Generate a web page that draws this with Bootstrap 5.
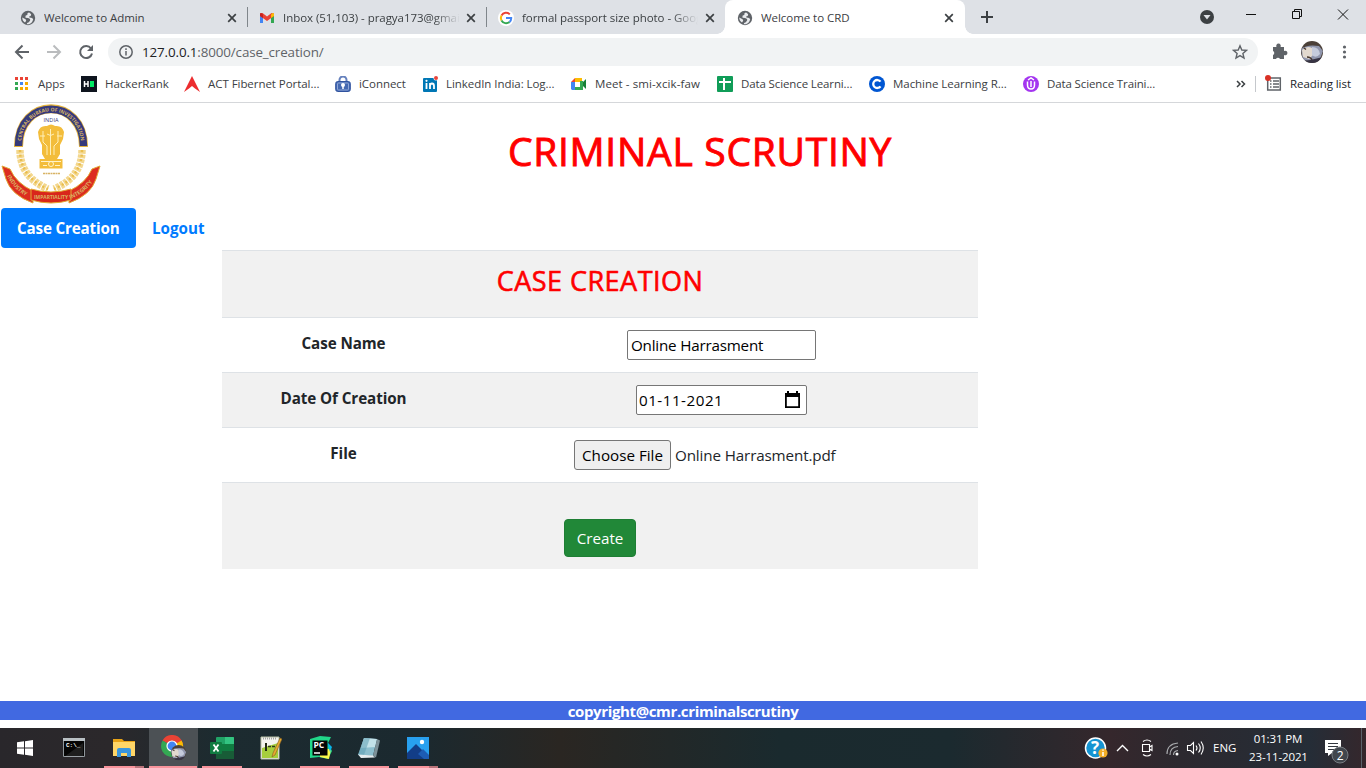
<!DOCTYPE html>
<html lang="en">
<head>
<meta charset="utf-8">
<title>Welcome to CRD</title>
<meta name="viewport" content="width=device-width, initial-scale=1">
<link href="https://cdn.jsdelivr.net/npm/bootstrap@5.3.0/dist/css/bootstrap.min.css" rel="stylesheet">
<style>
html,body{height:768px;overflow:hidden}
body{font-family:"Open Sans","Noto Sans",sans-serif;color:#212529;background:#fff}
svg{display:block;flex:none}
.ui{font-size:11.5px;letter-spacing:-.05px;white-space:nowrap;color:#3c4043}
/* browser window */
.tabstrip{height:34px;background:#dee1e6}
.tab{height:34px;padding-top:1px}
.t1{width:248px;padding-left:20px;border-right:0}
.t2{width:239px;padding-left:11px}
.t3{width:238px;padding-left:11px}
.t4{width:240px;padding-left:12px;background:#fff;border-radius:8px 8px 0 0;position:relative}
.t4::before,.t4::after{content:"";position:absolute;bottom:0;width:8px;height:8px}
.t4::before{left:-8px;background:radial-gradient(circle at 0 0,#dee1e6 7.5px,#fff 8px)}
.t4::after{right:-8px;background:radial-gradient(circle at 100% 0,#dee1e6 7.5px,#fff 8px)}
.tab-name{margin-left:8px;overflow:hidden;height:18px;line-height:18px}
.tab-name.faded{-webkit-mask-image:linear-gradient(90deg,#000 85%,transparent)}
.vsep{width:1px;height:20px;background:#80868b}
.toolbar{height:36px}
.omni{margin-left:12px;width:1150px;height:28px;background:#f1f3f4;border-radius:14px;padding:0 10px}
.url{font-size:13.4px;margin-left:8px;letter-spacing:-.13px;color:#5f6368}
.url b{font-weight:400;color:#202124}
.bookmarks{height:33px;display:grid;grid-template-columns:67px 103px 151px 87px 149px 146px 152px 154px 212px 1fr;padding:0 14px 4px;border-bottom:1px solid #d5d7da}
.bookmarks>div{display:flex;align-items:center}
.bookmarks span{margin-left:8px}
.bookmarks .wide{letter-spacing:.1px}
.bookmarks .tight{letter-spacing:-.12px}
/* site */
.site{height:625px}
.site-head{height:105px;padding:1px}
.site-title{width:1198px;padding-top:23px;text-align:center;color:red;font-size:39px;font-weight:500;line-height:48px;letter-spacing:.72px;-webkit-text-stroke:.9px red;margin:0}
.pill{height:40px;padding:0 16px;font-size:15.2px;font-weight:700;line-height:41px;color:#007bff}
.pill.on{background:#007bff;color:#fff;border-radius:4px;width:135px;letter-spacing:-.17px}
.case-table{width:756px;margin:2px 0 0 222px;table-layout:fixed;color:#212529}
.case-table td,.case-table th{border:0;border-top:1px solid #dee2e6;padding:12px;text-align:center;vertical-align:top;height:55px;background:transparent;box-shadow:none;line-height:24px;font-size:15.2px}
.case-table th{letter-spacing:-.08px;padding-top:13px;padding-bottom:11px}
.case-table tr:nth-child(odd){background:#f1f1f1}
.case-table .first td{height:67px}
.case-table .last td{height:86px;padding-top:36px;padding-bottom:11px}
.case-table .last td{line-height:20px}
.case-title{color:red;font-size:27px;font-weight:500;line-height:36px;letter-spacing:.48px;-webkit-text-stroke:.6px red;margin:0}
.field{height:30px;background:#fff;border:1px solid #767676;border-radius:2px;color:#000;font-size:15.2px;letter-spacing:-.2px;padding:0 3px;display:flex;align-items:center;margin:0 auto}
.f-name{width:189px}.f-date{width:171px;padding-left:2px}
.date-text{letter-spacing:.5px}
.file-text{letter-spacing:-.13px}
.pick{height:30px;width:97px;border:1px solid #767676;border-radius:3px;background:#efefef;font-size:15.2px;color:#000;padding:0;line-height:28px}
.btn-create{background:#218838;border-color:#1e7e34;color:#fff;font-size:15.2px;width:72px;height:38px;border-radius:4px;padding:0}
.foot{height:19px;background:#4169e1;color:#fff;font-weight:700;font-size:15px;line-height:21px;letter-spacing:-.36px;text-align:center;margin-top:132px}
/* taskbar */
.taskbar{height:40px;background:linear-gradient(90deg,#29272b 0,#2b282b 110px,#1c2b30 220px,#1b292f 420px,#2a2622 560px,#1a2a2e 780px,#1b2a2f 950px,#35272c 1110px,#2c292f 1180px,#252d37 1310px,#35272c 1366px)}
.app{width:49px;height:40px;display:flex;align-items:center;justify-content:center;position:relative}
.app.run::after{content:"";position:absolute;left:5px;width:40px;bottom:0;height:2px;background:#f8939b}
.app.now{background:#4c5155}
.app.now::after{left:0;width:48px}
.app.two::before{content:"";position:absolute;left:36px;width:9px;bottom:0;height:2px;background:#b9737a;z-index:1}
.tray{color:#fff;font-size:11.5px;line-height:18px;white-space:nowrap}
.clock{letter-spacing:-.12px}
</style>
</head>
<body>
<svg width="0" height="0" class="position-absolute"><defs>
<g id="globe"><circle cx="8" cy="8" r="7.2" fill="#5f6368"/><path d="M9.2 2.600c-1.600.2-2.200 1.200-1.700 2.200l-2 1v1.900l2.600.3 2 1.100v1.400l-1.300 1.800-1.700.7-.3 1.300c2.200.1 4-.5 5.300-2.400l1.100-2.500-1-1.300-2.800-.5-.3-1 1.600-.7.5-1.700zM2.200 7.400l3.400 1.900.6 1.500-1.200 1.600C3.200 11.300 2.300 9.600 2.200 7.400z" fill="#e9ebee"/></g>
<path id="cross" d="M1.200 1.200 8.800 8.800M8.800 1.200 1.200 8.800" stroke="#3c4043" stroke-width="1.700"/>
<clipPath id="face"><circle cx="11" cy="11" r="11"/></clipPath>
<g id="avatar" clip-path="url(#face)"><rect width="22" height="22" fill="#4b4038"/><path d="M0 8Q6 3 18 5l4 5-3 8-8 3-9-2z" fill="#9096ad"/><path d="M1 9q5-5 10-2l1 7-4 4-6-2z" fill="#e2d9cf"/><path d="M11 6q7 0 8 7-4 5-8 1z" fill="#c5cbdc"/><path d="M3 7l2 1.500M6 16q4 0 5 3" stroke="#4a3a30" stroke-width="1.500" fill="none"/><path d="M0 20q12-1 22-4v6H0z" fill="#373444"/></g>
</defs></svg>

<header>
<div class="tabstrip d-flex align-items-center ui">
 <div class="tab t1 d-flex align-items-center"><svg width="16" height="16"><use href="#globe"/></svg><div class="tab-name" style="width:183px">Welcome to Admin</div><svg width="10" height="10"><use href="#cross"/></svg></div><div class="vsep" style="margin-left:-1px"></div>
 <div class="tab t2 d-flex align-items-center"><svg width="16" height="16" viewBox="0 0 16 16"><path d="M1 4v9h3V6z" fill="#4285f4"/><path d="M12 6v7h3V4z" fill="#34a853"/><path d="M1 3.500V6l7 5 7-5V3.500L12.500 3 8 6.500 3.500 3z" fill="#ea4335"/><path d="M12 4.500V8l3-2V3.500Q13.500 2 12 4.500z" fill="#fbbc04"/><path d="M1 3.500V6l3 2V4.500Q2.500 2 1 3.500z" fill="#c5221f"/></svg><div class="tab-name faded" style="width:177px">Inbox (51,103) - pragya173@gmail.com</div><svg width="10" height="10" style="margin-left:6px"><use href="#cross"/></svg></div><div class="vsep" style="margin-left:-1px"></div>
 <div class="tab t3 d-flex align-items-center"><svg width="16" height="16" viewBox="0 0 16 16"><circle cx="8" cy="8" r="8" fill="#fff"/><g fill="none" stroke-width="2"><path d="M11.800 4.400A5.200 5.200 0 0 0 3.500 5.500" stroke="#ea4335"/><path d="M3.500 5.500a5.200 5.200 0 0 0 0 5" stroke="#fbbc05"/><path d="M3.500 10.500a5.200 5.200 0 0 0 8 1.400" stroke="#34a853"/><path d="M11.500 11.900A5 5 0 0 0 13.200 8H8" stroke="#4285f4"/></g></svg><div class="tab-name faded" style="width:176px">formal passport size photo - Google</div><svg width="10" height="10" style="margin-left:7px"><use href="#cross"/></svg></div>
 <div class="tab t4 d-flex align-items-center"><svg width="16" height="16"><use href="#globe"/></svg><div class="tab-name" style="width:183px">Welcome to CRD</div><svg width="10" height="10"><use href="#cross"/></svg></div>
 <svg width="401" height="34" viewBox="965 0 401 34"><path d="M981 17h12M987 11v12" stroke="#3c4043" stroke-width="2"/><circle cx="1207" cy="17" r="7" fill="#3c4043"/><path d="M1203.500 15h7l-3.500 4.500z" fill="#dee1e6"/><path d="M1246 14.500h10M1292.500 11.500h7v7h-7zM1294.500 11.500v-2h7v7h-2M1338 9.500l10 10M1348 9.500l-10 10" stroke="#111" fill="none"/></svg>
</div>
<div class="toolbar d-flex align-items-center">
 <svg width="96" height="36" viewBox="0 0 96 36" fill="none" stroke-width="2"><path d="M29 18H16.500M22.500 11.500 16 18l6.500 6.500" stroke="#5f6368"/><path d="M47 18h12.500M53.500 11.500 60 18l-6.500 6.500" stroke="#babcbe"/><path d="M91 14.500a6 6 0 1 0 1 5" stroke="#5f6368"/><path d="M93 11v6h-6z" fill="#5f6368"/></svg>
 <div class="omni d-flex align-items-center"><svg width="16" height="16" fill="none" stroke="#5f6368" stroke-width="1.500"><circle cx="8" cy="8" r="6.200"/><path d="M8 7v4.500M8 4.300v1.600"/></svg><div class="url"><b>127.0.0.1</b>:8000/case_creation/</div><svg class="ms-auto" width="16" height="16" fill="none" stroke="#5f6368" stroke-width="1.400"><path d="M8 1.800 9.800 6l4.700.4-3.600 3.100 1.100 4.600L8 11.600l-4 2.500 1.100-4.600L1.500 6.400 6.200 6z"/></svg></div>
 <svg width="108" height="36" viewBox="1258 0 108 36"><path d="M1273 13h3.500a2.300 2.300 0 1 1 4 0h3.500v4a2.300 2.300 0 1 1 0 4v4h-4a2.200 2.200 0 0 0-4 0h-3v-4a2.200 2.200 0 0 0 0-4z" fill="#5f6368"/><use href="#avatar" x="1301" y="7"/><g fill="#5f6368"><circle cx="1344.500" cy="13" r="1.600"/><circle cx="1344.500" cy="18" r="1.600"/><circle cx="1344.500" cy="23" r="1.600"/></g></svg>
</div>
<div class="bookmarks ui">
 <div><svg width="16" height="16"><g fill="#ea4335"><path d="M1 1h3v3H1zM6 1h3v3H6zM11 1h3v3h-3z"/></g><path d="M1 6h3v3H1zM1 11h3v3H1z" fill="#34a853"/><path d="M6 6h3v3H6z" fill="#4285f4"/><path d="M11 6h3v3h-3zM6 11h3v3H6zM11 11h3v3h-3z" fill="#f9ab00"/></svg><span>Apps</span></div>
 <div><svg width="16" height="16"><path d="M0 0h16v16H0z" fill="#0e141e"/><path d="M3.500 5v6M7 5v6M3 8h4" stroke="#fff" stroke-width="1.500"/><path d="M9 5h4v6H9z" fill="#00ea64"/></svg><span>HackerRank</span></div>
 <div><svg width="16" height="16"><path d="M8 0 16 16l-5-3.500L8 10l-3 2.500L0 16z" fill="#ec2d2f"/></svg><span>ACT Fibernet Portal...</span></div>
 <div><svg width="16" height="16" fill="none"><path d="M4.500 7V4a3.500 3.500 0 0 1 7 0v3" stroke="#6681bd" stroke-width="2"/><rect x=".7" y="5.500" width="14.600" height="10" rx="2" fill="#4569b1" stroke="#2f529e"/><rect x="2.500" y="7" width="11" height="7" rx="1" stroke="#8fa6d6"/><circle cx="8" cy="9" r="2" fill="#fff"/><path d="M8 9v4" stroke="#fff" stroke-width="1.500"/></svg><span>iConnect</span></div>
 <div><svg width="16" height="16"><rect x="1" y="2" width="14" height="14" rx="1" fill="#0077b5"/><path d="M4.500 7v6M8 13V7m0 3q0-2.500 2-2.500t2 2.500v3" stroke="#fff" stroke-width="1.800" fill="none"/><circle cx="4.500" cy="4.800" r="1.100" fill="#fff"/><circle cx="14" cy="2" r="2.500" fill="#fff"/><circle cx="14" cy="2" r="2" fill="#e8453c"/></svg><span>LinkedIn India: Log...</span></div>
 <div><svg width="16" height="16"><path d="M4 2h7v4H4z" fill="#fbbc04"/><path d="M0 6l4-4v4z" fill="#ea4335"/><path d="M0 6h4v8H1l-1-1z" fill="#4285f4"/><path d="M4 11h8v3H4zM9 5h3v9H9z" fill="#34a853"/><path d="M12 6l3-3v10l-3-3z" fill="#188038"/><path d="M4 6h5v5H4z" fill="#fff"/></svg><span class="wide">Meet - smi-xcik-faw</span></div>
 <div><svg width="16" height="16"><rect width="16" height="16" rx="1" fill="#109d58"/><path d="M2 6h12M7 2v12" stroke="#fff" stroke-width="2"/></svg><span class="tight">Data Science Learni...</span></div>
 <div><svg width="16" height="16"><circle cx="8" cy="8" r="8" fill="#0056d2"/><path d="M11.500 5.700a4 4 0 1 0 0 4.600" stroke="#fff" stroke-width="2.300" fill="none"/></svg><span>Machine Learning R...</span></div>
 <div><svg width="16" height="16"><circle cx="8" cy="8" r="8" fill="#a435f0"/><path d="M4.500 5.500V9q0 4 3.500 4t3.500-4V5.500M5 4l3-2 3 2M8 5v6" stroke="#fff" stroke-width="1.500" fill="none"/></svg><span class="tight">Data Science Traini...</span></div>
 <div><svg width="47" height="24" viewBox="1235 0 47 24" fill="none"><path d="M1237 9l3 3-3 3M1241.500 9l3 3-3 3" stroke="#3c4043" stroke-width="1.500"/><path d="M1255.500 4v16" stroke="#c5c8cc"/><path d="M1267.700 6h12.600v12h-12.600z" stroke="#5f6368" stroke-width="1.500"/><path d="M1273 9h6M1273 12h6M1273 15h6M1270 9h1.500M1270 12h1.500M1270 15h1.500" stroke="#5f6368" stroke-width="1.500"/><circle cx="1268" cy="6" r="3" fill="#d93025"/></svg><span class="text-dark">Reading list</span></div>
</div>
</header>

<main class="site">
 <div class="site-head d-flex">
  <svg width="100" height="100" viewBox="0 0 100 100" fill="none">
   <defs><path id="arcTop" d="M19.700 43C19.700-4.500 80.300-4.500 80.300 43"/><path id="ribL" d="M6 72Q15 89 31 95"/><path id="ribR" d="M69 95Q86 89 95 72"/></defs>
   <path d="M17.500 43C17.500-8 82.500-8 82.500 43" stroke="#e5b43d" stroke-width="9"/>
   <path d="M17.500 42C17.500-7 82.500-7 82.500 42" stroke="#363a7b" stroke-width="7.500"/>
   <path d="M19 46q0 27 28 39M81 46q0 27-28 39" stroke="#f3d78d" stroke-width="7.500" stroke-dasharray="3.500 1"/>
   <path d="M19 46q0 27 28 39M81 46q0 27-28 39" stroke="#e9bd4d" stroke-width="2.500" stroke-dasharray="2 2.500"/>
   <path d="M37 28q2-7 9-6 4-3 8 0 7-1 9 6l-1 7-3 6v9l-3 5H44l-3-5v-9l-3-6z" fill="#f3bd3b"/>
   <path d="M42 27v11l4 4v9M49.500 25v26M57 27v11l-4 4v9M39 32h5M56 32h5M46 30q3.500 3 7 0" stroke="#fff0b9"/>
   <path d="M38.500 55h23v9.500h-23z" fill="#f3bd3b"/><path d="M40 57.500h20M42 61.500h4M54 61.500h5" stroke="#fff3c9"/><circle cx="50" cy="60" r="2.500" stroke="#fff3c9"/><path d="M42 69.500h17" stroke="#d8b365" stroke-width="1.500" stroke-dasharray="2 .5"/>
   <path d="M1 62l8 3q6 14 23 22v12Q10 91 5 75zM99 62l-8 3q-6 14-23 22v12q22-8 27-24z" fill="#dc2d20" stroke="#e3a733"/>
   <path d="M30 85q20 6 40 0v11q-20 6-40 0z" fill="#d9261b" stroke="#e3a733"/>
   <g font-family="Open Sans, sans-serif" font-weight="700" fill="#d9b565"><text font-size="5"><textPath href="#arcTop" startOffset="50%" text-anchor="middle">CENTRAL BUREAU OF INVESTIGATION</textPath></text><text font-size="5.500"><textPath href="#ribL">INDUSTRY</textPath></text><text x="33" y="95" font-size="5.500" textLength="34" lengthAdjust="spacingAndGlyphs">IMPARTIALITY</text><text font-size="5.500"><textPath href="#ribR">INTEGRITY</textPath></text></g>
   <text x="42.500" y="18" font-size="5.500" font-family="Open Sans, sans-serif" fill="#363a7b" textLength="15">INDIA</text>
  </svg>
  <h1 class="site-title">CRIMINAL SCRUTINY</h1>
 </div>
 <nav class="nav nav-pills ps-0" style="margin-left:1px"><a class="pill on text-decoration-none text-nowrap">Case Creation</a><a class="pill text-decoration-none">Logout</a></nav>
 <table class="case-table">
  <colgroup><col style="width:243px"><col></colgroup>
  <tbody>
  <tr class="first"><td colspan="2"><h3 class="case-title">CASE CREATION</h3></td></tr>
  <tr><th>Case Name</th><td><div class="field f-name">Online Harrasment</div></td></tr>
  <tr><th>Date Of Creation</th><td><div class="field f-date"><span class="date-text">01-11-2021</span><svg class="ms-auto" width="18" height="18"><path d="M0 2h2V0h2v2h7V0h2v2h2v15H0zM1.800 6v9.300h11.400V6z" fill="#000" fill-rule="evenodd"/></svg></div></td></tr>
  <tr><th>File</th><td><div class="d-flex align-items-center" style="margin-left:97px"><button class="pick">Choose File</button><span class="file-text ms-1">Online Harrasment.pdf</span></div></td></tr>
  <tr class="last"><td colspan="2"><button class="btn btn-create">Create</button></td></tr>
  </tbody>
 </table>
 <footer class="foot"><span>copyright@cmr.criminalscrutiny</span></footer>
</main>

<div class="taskbar d-flex">
 <div class="app"><svg width="16" height="16" fill="#fff"><path d="M0 2.300 7 1.300V7.500H0zM8 1.200 16 0v7.500H8zM0 8.500h7v6.200l-7-1zM8 8.500h8V16l-8-1.200z"/></svg></div>
 <div class="app" style="width:50px"><svg width="22" height="20"><path d="M.5.500h21v18H.5z" fill="#050505" stroke="#8f969b"/><path d="M0 0h22v3H0z" fill="#b9c0c4"/><path d="M1 19 20 5v14z" fill="#fff" opacity=".1"/><text x="3" y="9" font-family="Liberation Mono,monospace" font-size="6" font-weight="700" fill="#fff">C:\_</text></svg></div>
 <div class="app run two"><svg width="22" height="20"><path d="M0 1h9l2 2h11v15H0z" fill="#e8a317"/><path d="M0 4h22v14H0z" fill="#ffd667"/><path d="M4 19v-7q0-2 2-2h10q2 0 2 2v7h-4v-4H8v4z" fill="#3a96dd"/></svg></div>
 <div class="app run now" style="margin-left:1px"><svg width="26" height="26"><path d="M11 11 1.500 5.500A11 11 0 0 1 20.600 5.500L22 9z" fill="#ea4335"/><path d="M11 11 1.500 5.500A11 11 0 0 0 11 22z" fill="#34a853"/><path d="M11 11v11A11 11 0 0 0 20.600 5.500z" fill="#fbbc04"/><circle cx="11" cy="11" r="5" fill="#4285f4" stroke="#fff" stroke-width="1.200"/><use href="#avatar" transform="translate(10 10) scale(.69)"/></svg></div>
 <div class="app run" style="margin-left:-1px"><svg width="24" height="22"><rect x="6" width="18" height="22" rx="1" fill="#21a366"/><path d="M6 7h18v7H6z" fill="#107c41"/><path d="M15 0h8q1 0 1 1v6h-9z" fill="#33c481"/><path d="M6 14h18v8H6z" fill="#185c37"/><rect y="5" width="12" height="12" rx="1" fill="#107c41"/><path d="M3.500 7.500l5 7M8.500 7.500l-5 7" stroke="#fff" stroke-width="1.800"/></svg></div>
 <div class="app"><svg width="22" height="25"><path d="M1 1h18v22H1z" fill="#f4f4ef" stroke="#b7bfa5"/><path d="M2 12 18 7v15H2z" fill="#a6cf3c"/><path d="M3 2.500h14" stroke="#a5a5a5" stroke-width="2" stroke-dasharray="1 1"/><path d="M6 7v8" stroke="#222b14" stroke-width="2"/><path d="M8 10.500h3M12 10.500h3" stroke="#303b1a" stroke-width="1.500"/><path d="M20 2 13 17l-1 4 3-2 7-16z" fill="#e6aa30" stroke="#855c24" stroke-width=".6"/></svg></div>
 <div class="app run"><svg width="24" height="24"><path d="M2 3 12 0l11 1-3 6 4 8-4 8-9-2-9 1z" fill="#21d789"/><path d="M12 13h11l-2 10-9-2z" fill="#fcf84a"/><path d="M19 6l5 5-2 5z" fill="#07b5e8"/><rect x="4.500" y="4.500" width="15" height="15" fill="#050505"/><text x="5.500" y="12" font-size="8.500" font-family="Open Sans" font-weight="700" fill="#fff">PC</text><path d="M6 17h6" stroke="#fff" stroke-width="1.500"/></svg></div>
 <div class="app run"><svg width="24" height="24"><path d="M7 2 20 3 16 20 1 19z" fill="#8dbfce"/><path d="M7 2 20 3 18 11 4 12z" fill="#c3e2e9"/><path d="M7 2h6L7 19H1z" fill="#5f9fb2" opacity=".55"/><path d="M1 18.500l15 1 2 2-14 .5z" fill="#e8eef0"/><path d="M20 3l3 1.500-4 17-3-1.500z" fill="#7d9198"/></svg></div>
 <div class="app run two"><svg width="22" height="22"><path d="M0 0h22v22H0z" fill="#28a0ef"/><circle cx="15" cy="5" r="2.200" fill="#fff"/><path d="M0 16 9 7 22 20v2H0z" fill="#123d87"/><path d="M11 17l5-5 6 6v4h-5z" fill="#1d5cb4"/></svg></div>
 <div class="d-flex align-items-center ms-auto tray">
  <svg width="128" height="40" viewBox="1084 0 128 40" fill="none"><circle cx="1095.500" cy="20" r="10" fill="#1594d2" stroke="#fff" stroke-width="1.500"/><text x="1091" y="26" font-size="17" font-weight="700" font-family="Open Sans" fill="#fff">?</text><circle cx="1103" cy="25" r="4.600" fill="#f4ae28"/><path d="M1103 24v4M1103 21.500v1.300" stroke="#fff" stroke-width="1.500"/>
  <path d="M1117 23l5.500-5.500 5.500 5.500" stroke="#fff" stroke-width="1.400"/><path d="M1142.500 16.500h7v7h-7zM1149.500 19l2.500-1.500v5l-2.500-1.500M1143 13.500q4-3 8 0M1143 26.500q4 3 8 0" stroke="#fff" stroke-width="1.100"/>
  <path d="M1167 26q0-10 11-11M1170 27q0-8 8-8.500M1173.500 27q0-4 4.500-4.500" stroke="#a7a9ac" stroke-width="1.200"/><circle cx="1177" cy="26" r="1.500" fill="#fff"/>
  <path d="M1187.500 17.500h3l3-3v11l-3-3h-3zM1196 17.500q2 2.500 0 5M1198.500 15.500q3.500 4.500 0 9M1201 13.500q4.500 6.500 0 13" stroke="#fff" stroke-width="1.100"/></svg>
  <span style="width:36px;margin-left:1px">ENG</span>
  <div class="text-center clock" style="width:58px">01:31 PM<br>23-11-2021</div>
  <svg width="59" height="40" viewBox="1307 0 59 40"><path d="M1325 12h16v13h-9l-4 3v-3h-3z" fill="#fff"/><path d="M1328 15.500h10M1328 18.500h10M1328 21.500h7" stroke="#333840"/><circle cx="1340" cy="27" r="8" fill="#41464d" stroke="#777c81"/><text x="1336.800" y="31.500" font-size="12" font-family="Open Sans" fill="#fff">2</text><path d="M1361.500 0v40" stroke="#5b626a"/></svg>
 </div>
</div>
<script src="https://cdn.jsdelivr.net/npm/bootstrap@5.3.0/dist/js/bootstrap.bundle.min.js"></script>
</body>
</html>
